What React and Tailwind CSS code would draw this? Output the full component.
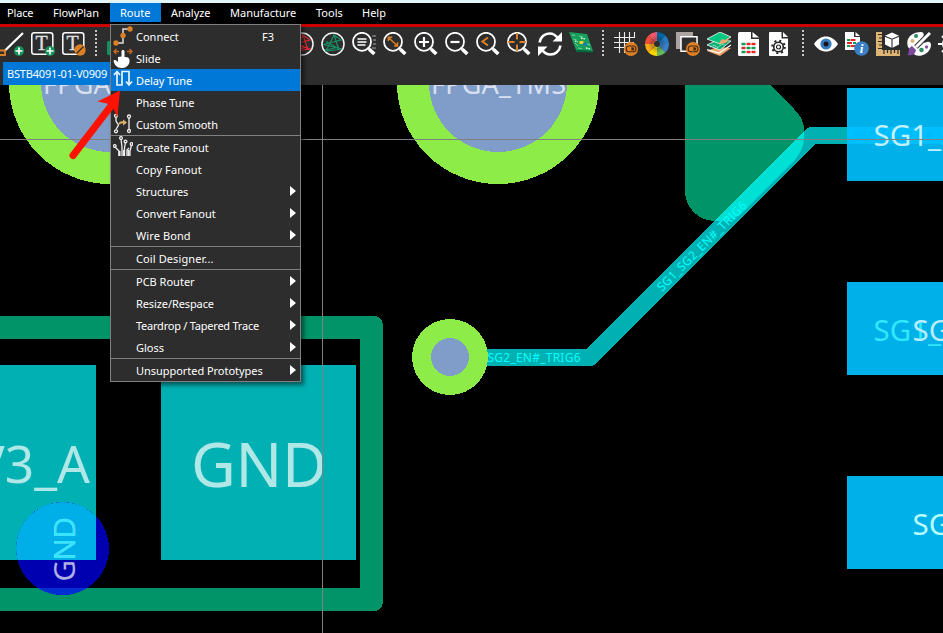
import React from "react";

const menus = [
  { label: "Place", cls: "w-[43px] pl-[7px] tracking-[-0.15px]" },
  { label: "FlowPlan", cls: "w-[67px] pl-[10px]" },
  { label: "Route", cls: "w-[51px] pl-[10px]  bg-[#0078d7]" },
  { label: "Analyze", cls: "w-[59px] pl-[10px] tracking-[-0.05px]" },
  { label: "Manufacture", cls: "w-[86px] pl-[10px]" },
  { label: "Tools", cls: "w-[46px] pl-[10px]" },
  { label: "Help", cls: "w-[44px] pl-[10px]" },
];

function Icon({ children, className = "" }) {
  return (
    <svg className={"block h-6 w-6 shrink-0 " + className} viewBox="0 0 24 24" fill="none">
      {children}
    </svg>
  );
}

function Cell({ children }) {
  return <div className="w-[31px] shrink-0">{children}</div>;
}

function Dots() {
  return (
    <svg className="block h-[27px] w-[2px] shrink-0" viewBox="0 0 2 27">
      <path d="M1 0V27" stroke="#c8c8c8" strokeWidth="2" strokeDasharray="2 2" />
    </svg>
  );
}

function Lens({ children }) {
  return (
    <Icon>
      <circle cx="10" cy="9.8" r="9" stroke="#fff" strokeWidth="1.8" />
      <path d="M15.5 15.5l2 2" stroke="#fff" strokeWidth="2" />
      <path d="M17.3 17.3l5 4.7" stroke="#fff" strokeWidth="3.6" />
      {children}
    </Icon>
  );
}

function Letter({ children }) {
  return (
    <Icon>
      <rect x=".8" y=".8" width="21" height="21.4" rx="2.5" stroke="#fff" strokeWidth="1.5" />
      <text x="10.5" y="17.5" fill="#e0e0e0" fontSize="20" textAnchor="middle" stroke="#e0e0e0" strokeWidth=".3" fontFamily="Liberation Serif, serif">T</text>
      {children}
    </Icon>
  );
}

const plus = (
  <g>
    <circle cx="19" cy="19" r="5" fill="#12935a" />
    <path d="M19 15.5v7M15.5 19h7" stroke="#fff" strokeWidth="1.7" />
  </g>
);

function Star({ color }) {
  return (
    <Icon>
      <circle cx="12" cy="12" r="11" stroke="#f4f4f4" strokeWidth="1.5" />
      <path d="M13 3L5 19 21 17 2.500 12.500 20 8 13 3l5 15M5 9.500l14 8M4 18l14-3" stroke={color} strokeWidth="1.2" />
    </Icon>
  );
}

function Toggle() {
  return (
    <g>
      <circle cx="17" cy="17" r="7" fill="#dd7f24" />
      <rect x="12.2" y="14" width="9.8" height="5.8" rx="2.9" stroke="#4a2b12" strokeWidth="1.1" />
      <path d="M17.4 15.2h1.2a1.7 1.7 0 010 3.4h-1.2z" fill="#4a2b12" />
    </g>
  );
}

function Sheet({ children }) {
  return (
    <Icon>
      <path d="M1.5 0H13l1 6 7 1v16a1 1 0 01-1 1H1.5a1.500 1.500 0 01-1.500-1.500v-21A1.500 1.500 0 011.500 0z" fill="#fff" />
      <path d="M13 0h8v7h-8z" fill="#2d2d2d" />
      <path d="M14.500 0L21 5.500h-6.500z" fill="#fff" />
      {children}
    </Icon>
  );
}

function Cells() {
  return (
    <g>
      {[11, 15, 19].map((y, i) => (
        <g key={y}>
          <path d={`M3.500 ${y + 1}h4`} stroke={i === 1 ? "#e02525" : "#0b9b55"} strokeWidth="2.400" />
          <path d={`M8.500 ${y + 1}h4`} stroke={i === 1 ? "#0b9b55" : "#e02525"} strokeWidth="2.400" />
          <path d={`M13.500 ${y + 1}h4`} stroke={i === 1 ? "#0b9b55" : "#e02525"} strokeWidth="2.400" />
        </g>
      ))}
    </g>
  );
}

const wheel = ["#00659e", "#2679c2", "#3a7fc8", "#66b85c", "#ffd500", "#f9a916", "#ef4d38", "#f0556a"];

function ColorWheel() {
  return (
    <Icon>
      {wheel.map((c, i) => (
        <g key={c} transform={`rotate(${i * 45} 12 12)`}>
          <path d="M12 12V0a12 12 0 018.500 3.500z" fill={c} />
        </g>
      ))}
      <circle cx="12" cy="12" r="7.500" stroke="#333" strokeOpacity=".2" />
      <circle cx="12" cy="12" r="5" stroke="#222" strokeOpacity=".25" strokeWidth="3" />
      <circle cx="12" cy="12" r="3" fill="#2d2d2d" />
    </Icon>
  );
}

function Toolbar() {
  return (
    <div className="flex h-[35px] overflow-hidden pt-[5px]">
      <div className="flex w-[95px] shrink-0">
        <Cell>
          <Icon>
            <path d="M4 19.500L23 1" stroke="#fff" strokeWidth="2.200" />
            <path d="M0 18.500h5v4.500H0" stroke="#dd7f24" strokeWidth="1.800" />
            {plus}
          </Icon>
        </Cell>
        <Cell><Letter>{plus}</Letter></Cell>
        <Cell>
          <Letter>
            <circle cx="18" cy="18" r="5.700" fill="#dd7f24" />
            <path d="M14.500 21.500l7-7" stroke="#2d2d2d" strokeWidth="1.300" />
          </Letter>
        </Cell>
      </div>
      <div className="-mt-[2px] w-[9px] shrink-0"><Dots /></div>
      <div className="w-[186px] shrink-0">
        <Icon><rect x="3" y="9" width="18" height="14" rx="1.500" fill="#12935a" /></Icon>
      </div>
      <Cell><Star color="#e02d35" /></Cell>
      <Cell><Star color="#159164" /></Cell>
      <Cell>
        <Lens>
          <path d="M5.500 7h9M5.500 10h9M5.500 13h8" stroke="#fff" strokeWidth="1.500" />
          <path d="M20 4h4M21 8h3M21 12h3M20 16h4" stroke="#aaa" strokeWidth="1.200" />
        </Lens>
      </Cell>
      <Cell><Lens><path d="M6 6l8 7.500M5.300 9V5.300h4M11 14h3.500v-3.700" stroke="#dd7f24" strokeWidth="1.500" /></Lens></Cell>
      <Cell><Lens><path d="M10 5v10M5 10h10" stroke="#fff" strokeWidth="2.200" /></Lens></Cell>
      <Cell><Lens><path d="M5.500 10h9" stroke="#fff" strokeWidth="2.200" /></Lens></Cell>
      <Cell><Lens><path d="M12 5.500L6.500 9.500l5.500 4" stroke="#dd7f24" strokeWidth="2.100" /></Lens></Cell>
      <Cell><Lens><path d="M10 1v6.500M10 12.500V19M1 10h6.500M12.500 10H19" stroke="#dd7f24" strokeWidth="2" /></Lens></Cell>
      <Cell>
        <Icon>
          <path d="M1.500 10.500C2.500 4.500 7 1.500 11.500 1.500c4 0 6.500 1.800 8.500 5M22.500 13.500c-1 6-5.500 9-10 9-4 0-6.500-1.800-8.500-5" stroke="#fff" strokeWidth="2.500" />
          <path d="M24 0v9.500h-9.500zM0 24v-9.500h9.500z" fill="#fff" />
        </Icon>
      </Cell>
      <div className="w-[33px] shrink-0">
        <Icon>
          <path d="M0 0l18 2 6 17-17-1z" fill="#18a05a" />
          <path d="M7 18l17 1v1.500L7 20z" fill="#07693c" />
          <path d="M3 3l3 .4M10 4l4 1M4.500 7l3 1M18 12l3 1M9 16l4 .5M6 11l3 3" stroke="#6fd39e" />
          <rect x="10.500" y="9" width="4" height="3" fill="#f0cf22" />
          <rect x="14" y="11" width="4" height="2.500" fill="#1675d0" />
          <path d="M12 6l4 1M6 9l3 1M17 16l4 1" stroke="#fff" strokeWidth="1.300" strokeDasharray="1.500 1" />
        </Icon>
      </div>
      <div className="-mt-[2px] w-3 shrink-0"><Dots /></div>
      <Cell>
        <Icon>
          <path d="M5.500 0v21M10.500 0v21M15.500 0v12M20.500 0v6M0 5.500h21M0 10.500h20M0 15.500h12" stroke="#ededed" strokeWidth="1.100" />
          <Toggle />
        </Icon>
      </Cell>
      <Cell><ColorWheel /></Cell>
      <Cell>
        <Icon>
          <path d="M0 0h17v17H0z" fill="#aaa5a2" />
          <path d="M5 4.800h16v14.500H5z" fill="#2d2d2d" stroke="#fff" strokeWidth="1.500" />
          <Toggle />
        </Icon>
      </Cell>
      <Cell>
        <Icon>
          <path d="M0 19l10-4 14 1-11 8z" fill="#f1a46b" />
          <path d="M0 13l10-5 14 1-11 9z" fill="#0caf72" stroke="#fff" strokeWidth=".8" />
          <path d="M0 7L13 0l11 5-11 7z" fill="#00c781" stroke="#fff" strokeWidth=".8" />
          <path d="M11 12l4-5 3 1 5-3-4 6z" fill="#f1a46b" />
          <path d="M3 15l5-2 2 3 5-4 3 1" stroke="#dff" strokeWidth=".8" strokeDasharray="2 1" />
          <path d="M0 17.500l12 3.500 12-8" stroke="#fff" strokeWidth="1.200" />
        </Icon>
      </Cell>
      <Cell><Sheet><Cells /></Sheet></Cell>
      <div className="w-[33px] shrink-0">
        <Icon>
          <path d="M1 0h11.500v6.500H19V23a1 1 0 01-1 1H1a1 1 0 01-1-1V1a1 1 0 011-1z" fill="#fff" />
          <path d="M14 0l5 5h-5z" fill="#fff" />
          <circle cx="9.500" cy="15" r="4.800" stroke="#222" strokeWidth="1.600" />
          <circle cx="9.500" cy="15" r="6.300" stroke="#222" strokeWidth="2" strokeDasharray="2 2.950" />
          <circle cx="9.500" cy="15" r="2" stroke="#222" strokeWidth="1.200" />
        </Icon>
      </div>
      <div className="-mt-[2px] w-3 shrink-0"><Dots /></div>
      <Cell>
        <Icon>
          <path d="M0 12C6 2 18 2 24 12 18 22 6 22 0 12z" fill="#fff" />
          <circle cx="12" cy="12" r="5.600" fill="#367bbf" />
          <circle cx="12" cy="12" r="2.500" fill="#171717" />
        </Icon>
      </Cell>
      <Cell>
        <Icon>
          <path d="M0 0h9v5h6v13H0z" fill="#fff" />
          <path d="M10.500 0L15 4h-4.500z" fill="#fff" />
          <path d="M2 8h3M8 11h3M2 14h3" stroke="#0b9b55" strokeWidth="2" />
          <path d="M5.500 8h5M2 11h5M5.500 14h5" stroke="#e02525" strokeWidth="2" />
          <circle cx="16.500" cy="16.500" r="7.300" fill="#3980c4" />
          <text x="16.500" y="21" fill="#fff" fontSize="13" textAnchor="middle" fontWeight="bold" fontStyle="italic" fontFamily="Liberation Serif, serif">i</text>
        </Icon>
      </Cell>
      <Cell>
        <Icon>
          <path d="M0 0h6v18h18v6H0z" fill="#ddb474" />
          <path d="M2 2.500h4M3 6h3M2 9.500h4M3 13h3M2 16.500h4M8 18v4M11.500 18v3M15 18v4M18.500 18v3M22 18v4" stroke="#2d2d2d" strokeWidth="1.200" />
          <path d="M16 .5l7 3.200v8.800l-7 3.500-7-3.500V3.700z" fill="#fff" />
          <path d="M9 4.200l7 3 7-3M16 7.200V16" stroke="#2d2d2d" strokeWidth="1.100" />
        </Icon>
      </Cell>
      <Cell>
        <Icon>
          <path d="M1 15C-2 6 5 0 14 0c4 0 3 5 1 7-2 3 1 5 5 3 4-1 5 3 3 7-3 6-10 8-15 6z" fill="#fff" />
          <circle cx="9" cy="4" r="2" fill="#2f8a62" />
          <circle cx="5.500" cy="9" r="2" fill="#dfb56e" />
          <circle cx="14.500" cy="18" r="2.300" fill="#2f8a62" />
          <circle cx="19.500" cy="15" r="1.700" fill="#8954a0" />
          <path d="M23 1L9 15" stroke="#2d2d2d" strokeWidth="5" />
          <path d="M23 1L9 15" stroke="#fff" strokeWidth="3" />
          <path d="M0 23c3-1 0-7 5-9l4 4c-1 5-5 6-9 5z" fill="#7d4aa0" />
        </Icon>
      </Cell>
      <Icon>
        <circle cx="12" cy="12" r="7" stroke="#fff" strokeWidth="2" />
        <path d="M0 12h4M4 4l4 4M4 20l4-4" stroke="#fff" strokeWidth="2.200" />
      </Icon>
    </div>
  );
}

const routeIcons = {
  connect: (
    <g>
      <path d="M3 18h7V4h7" stroke="#ddd" strokeWidth="1.500" />
      <circle cx="3" cy="18" r="2.700" fill="#dd7f24" />
      <circle cx="10" cy="10.500" r="2.700" fill="#dd7f24" />
      <circle cx="17" cy="4" r="2.700" fill="#dd7f24" />
    </g>
  ),
  slide: (
    <g>
      <path d="M1 4.500h5M14 4.500h5M3.500 2L1 4.500 3.500 7M16.500 2L19 4.500 16.500 7" stroke="#c9681f" strokeWidth="1.400" />
      <path d="M8.500 4.500c0-2 3-2 3 0V10c4 0 5.500 1 5 5-1 4-4 6-8 6C4 21 1.500 18 .5 14c0-1.500 2-1.500 3.500 0l1 1v-5l3.500-.5z" fill="#fff" />
    </g>
  ),
  delay: (
    <g>
      <path d="M4 4v12h5V2.500h7V15" stroke="#e8f5ff" strokeWidth="1.700" />
      <path d="M1 6l3-3.500L7 6M13 12.500l3 3.500 3-3.500" stroke="#e8f5ff" strokeWidth="1.700" />
    </g>
  ),
  smooth: (
    <g stroke="#eee" strokeWidth="1.300">
      <path d="M3 4v4l2.500 4L3 16.500M16 5v12" />
      <circle cx="3" cy="2.800" r="1.500" />
      <circle cx="3" cy="18.300" r="1.500" />
      <circle cx="16" cy="3.500" r="1.500" />
      <circle cx="16" cy="18" r="1.500" />
      <path d="M6 11c1.500-2 3.500-2 5-1.500" stroke="#dfb56e" strokeWidth="2" />
      <path d="M10 6.500l4 3-4 3z" fill="#dfb56e" stroke="none" />
    </g>
  ),
  fanout: (
    <g stroke="#eee" strokeWidth="1.300">
      <path d="M6 20v-5l-4-4M9 20V11L8 3M11.500 20v-8l1-6M14 20v-6l2-2M17 20v-5l1.500-6" />
      <circle cx="1.800" cy="10" r="1.300" />
      <circle cx="8" cy="2" r="1.400" />
      <circle cx="12.500" cy="5.500" r="1.400" />
      <circle cx="18.500" cy="8" r="1.300" />
      <path d="M6.500 15v5M11 14v6M15.500 14v6" strokeWidth="2" />
    </g>
  ),
};

const groups = [
  [
    { label: "Connect", icon: "connect", keys: "F3" },
    { label: "Slide", icon: "slide" },
    { label: "Delay Tune", icon: "delay", active: true, cls: "tracking-[-0.1px]" },
    { label: "Phase Tune", cls: "tracking-[-0.1px]" },
    { label: "Custom Smooth", icon: "smooth", cls: "tracking-[-0.1px]" },
  ],
  [
    { label: "Create Fanout", icon: "fanout" },
    { label: "Copy Fanout", cls: "tracking-[0.1px]" },
    { label: "Structures", sub: true, cls: "tracking-[-0.1px]" },
    { label: "Convert Fanout", sub: true },
    { label: "Wire Bond", sub: true, cls: "tracking-[0.1px]" },
  ],
  [{ label: "Coil Designer...", cls: "tracking-[0.1px]" }],
  [
    { label: "PCB Router", sub: true },
    { label: "Resize/Respace", sub: true, cls: "tracking-[-0.1px]" },
    { label: "Teardrop / Tapered Trace", sub: true, cls: "tracking-[-0.23px]" },
    { label: "Gloss", sub: true },
  ],
  [{ label: "Unsupported Prototypes", sub: true, cls: "tracking-[-0.04px]" }],
];

function RouteMenu() {
  return (
    <div className="absolute left-[110px] top-6 w-[191px] border border-[#808080] bg-[#2d2d2d] shadow-[3px_3px_4px_rgba(0,0,0,0.5)]">
      {groups.map((items, g) => (
        <div key={g} className={g ? "border-t border-[#808080]" : ""}>
          {items.map((it) => (
            <div key={it.label} className={"flex h-[22px] items-center " + (it.active ? "bg-[#0078d7]" : "")}>
              <div className="w-[25px] shrink-0 pl-[2px]">
                {it.icon && (
                  <svg className="block h-[22px] w-5" viewBox="0 0 20 22" fill="none">{routeIcons[it.icon]}</svg>
                )}
              </div>
              <span className={"grow whitespace-nowrap pt-[2px] leading-[22px] " + (it.cls || "")}>{it.label}</span>
              {it.keys && <span className="w-[38px] pt-[2px] leading-[22px]">{it.keys}</span>}
              {it.sub && (
                <svg className="mr-[4px] mb-[1px] h-[10px] w-[6px] shrink-0" viewBox="0 0 6 10"><path d="M0 0l6 5-6 5z" fill="#fff" /></svg>
              )}
            </div>
          ))}
        </div>
      ))}
    </div>
  );
}

const trace = "M480 357.500H590L812 135.500H847";
const pour = "M685 80H765L794 109C801 116 804 122 804 130V138C804 146 800 153 795 160L742 213C736 219 726 221 716 221C698 221 685 208 685 190Z";

function Board() {
  return (
    <svg className="block h-[548px] w-[943px]" viewBox="0 85 943 548" fontFamily="Noto Sans, Open Sans, sans-serif">
      <defs>
        <clipPath id="pour"><path d={pour} /></clipPath>
        <clipPath id="pad"><rect x="0" y="365" width="96" height="195" /></clipPath>
        <clipPath id="via"><circle cx="62.500" cy="548.500" r="46.500" /></clipPath>
      </defs>
      <rect y="85" width="943" height="548" fill="#000" />
      {[110, 498].map((x) => (
        <g key={x} shapeRendering="crispEdges">
          <circle cx={x} cy="83" r="101" fill="#8eec48" />
          <circle cx={x} cy="83" r="69" fill="#809cc8" />
          <text x={x - 67} y="93.500" fontSize="27" textLength="135" fill="#d8e0f0">FPGA_TMS</text>
        </g>
      ))}
      <path d="M-20 316H373Q383 316 383 326V601Q383 611 373 611H-20V588H360V339H-20Z" fill="#009468" shapeRendering="crispEdges" />
      <rect x="0" y="365" width="96" height="195" fill="#00b0b2" />
      <rect x="161" y="365" width="195" height="195" fill="#00b0b2" />
      <text x="90" y="483" fontSize="51.500" textAnchor="end" fill="#b0e8e8">V3_A</text>
      <text x="191" y="487" fontSize="61.500" textLength="136" fill="#b0e8e8">GND</text>
      <circle cx="62.500" cy="548.500" r="46.500" fill="#0000b0" shapeRendering="crispEdges" />
      <g clipPath="url(#via)">
        <rect x="0" y="480" width="96" height="80" fill="#00aee8" />
        <rect x="0" y="588" width="120" height="23" fill="#0030d4" />
      </g>
      <text transform="translate(74.500 581.500) rotate(-90)" fontSize="29.500" textLength="64.500" fill="#b0b0e8">GND</text>
      <g clipPath="url(#pad)">
        <text transform="translate(74.500 581.500) rotate(-90)" fontSize="29.500" textLength="64.500" fill="#30e8ff">GND</text>
      </g>
      <g shapeRendering="crispEdges">
        <path d={pour} fill="#009468" />
        <path d={trace} fill="none" stroke="#00b0b2" strokeWidth="17" strokeLinejoin="round" />
        <path d={trace} fill="none" stroke="#00e0d4" strokeWidth="17" strokeLinejoin="round" clipPath="url(#pour)" />
        <circle cx="450" cy="357" r="38" fill="#8eec48" />
        <circle cx="450" cy="357" r="19" fill="#809cc8" />
      </g>
      <text x="487.500" y="362" fontSize="12" textLength="93" fill="#00ffff">SG2_EN#_TRIG6</text>
      <text transform="translate(662 292) rotate(-45)" fontSize="12" textLength="121" fill="#00ffff">SG1_SG2_EN#_TRIG6</text>
      {[88, 282, 476].map((y) => <rect key={y} x="847" y={y} width="96" height="93" fill="#00b0e8" />)}
      <rect x="847" y="127" width="96" height="17" fill="#00bfff" />
      <text x="853" y="140" fontSize="12" textLength="80" fill="#00b9f8">SG1_SG2_EN#</text>
      <g fontSize="29.500">
        <text x="873.500" y="146" fill="#c0f0ff">SG1_SG2</text>
        <text x="873.500" y="340.500" fill="#30e8ff">SG1_SG2</text>
        <text x="912.500" y="340.500" fill="#b8ecff">SG2</text>
        <text x="912.500" y="534.500" fill="#b8ffff">SG2</text>
      </g>
      <path d="M0 139.500H943M322.500 85V633" stroke="#808080" strokeWidth="1" />
    </svg>
  );
}

export default function App() {
  return (
    <div className="relative h-[633px] w-[943px] overflow-hidden bg-black font-['Noto_Sans','Open_Sans',sans-serif] text-[11px] text-white">
      <div className="h-[3px] bg-[#e2f5f8]" />
      <div className="flex h-[21px]">
        {menus.map((m) => (
          <div key={m.label} className={"h-[19px] whitespace-nowrap leading-[20px] " + m.cls}>{m.label}</div>
        ))}
      </div>
      <div className="h-[3px] bg-[#cc0000]" />
      <div className="h-[58px] bg-[#2d2d2d]">
        <Toolbar />
        <div className="flex h-[23px]">
          <div className="ml-[3px] w-[113px] bg-[#0078d7] pl-1 leading-[24px] tracking-[-0.18px]">BSTB4091-01-V0909</div>
        </div>
      </div>
      <Board />
      <RouteMenu />
      <svg className="absolute left-[64px] top-[86px] h-[76px] w-[60px]" viewBox="64 86 60 76">
        <path d="M73 155.500L111 106" stroke="#ff1200" strokeWidth="7" strokeLinecap="round" />
        <path d="M120 90.500L97.500 101.500 107 103.500 113 108 117.500 117Z" fill="#ff1200" />
      </svg>
    </div>
  );
}
